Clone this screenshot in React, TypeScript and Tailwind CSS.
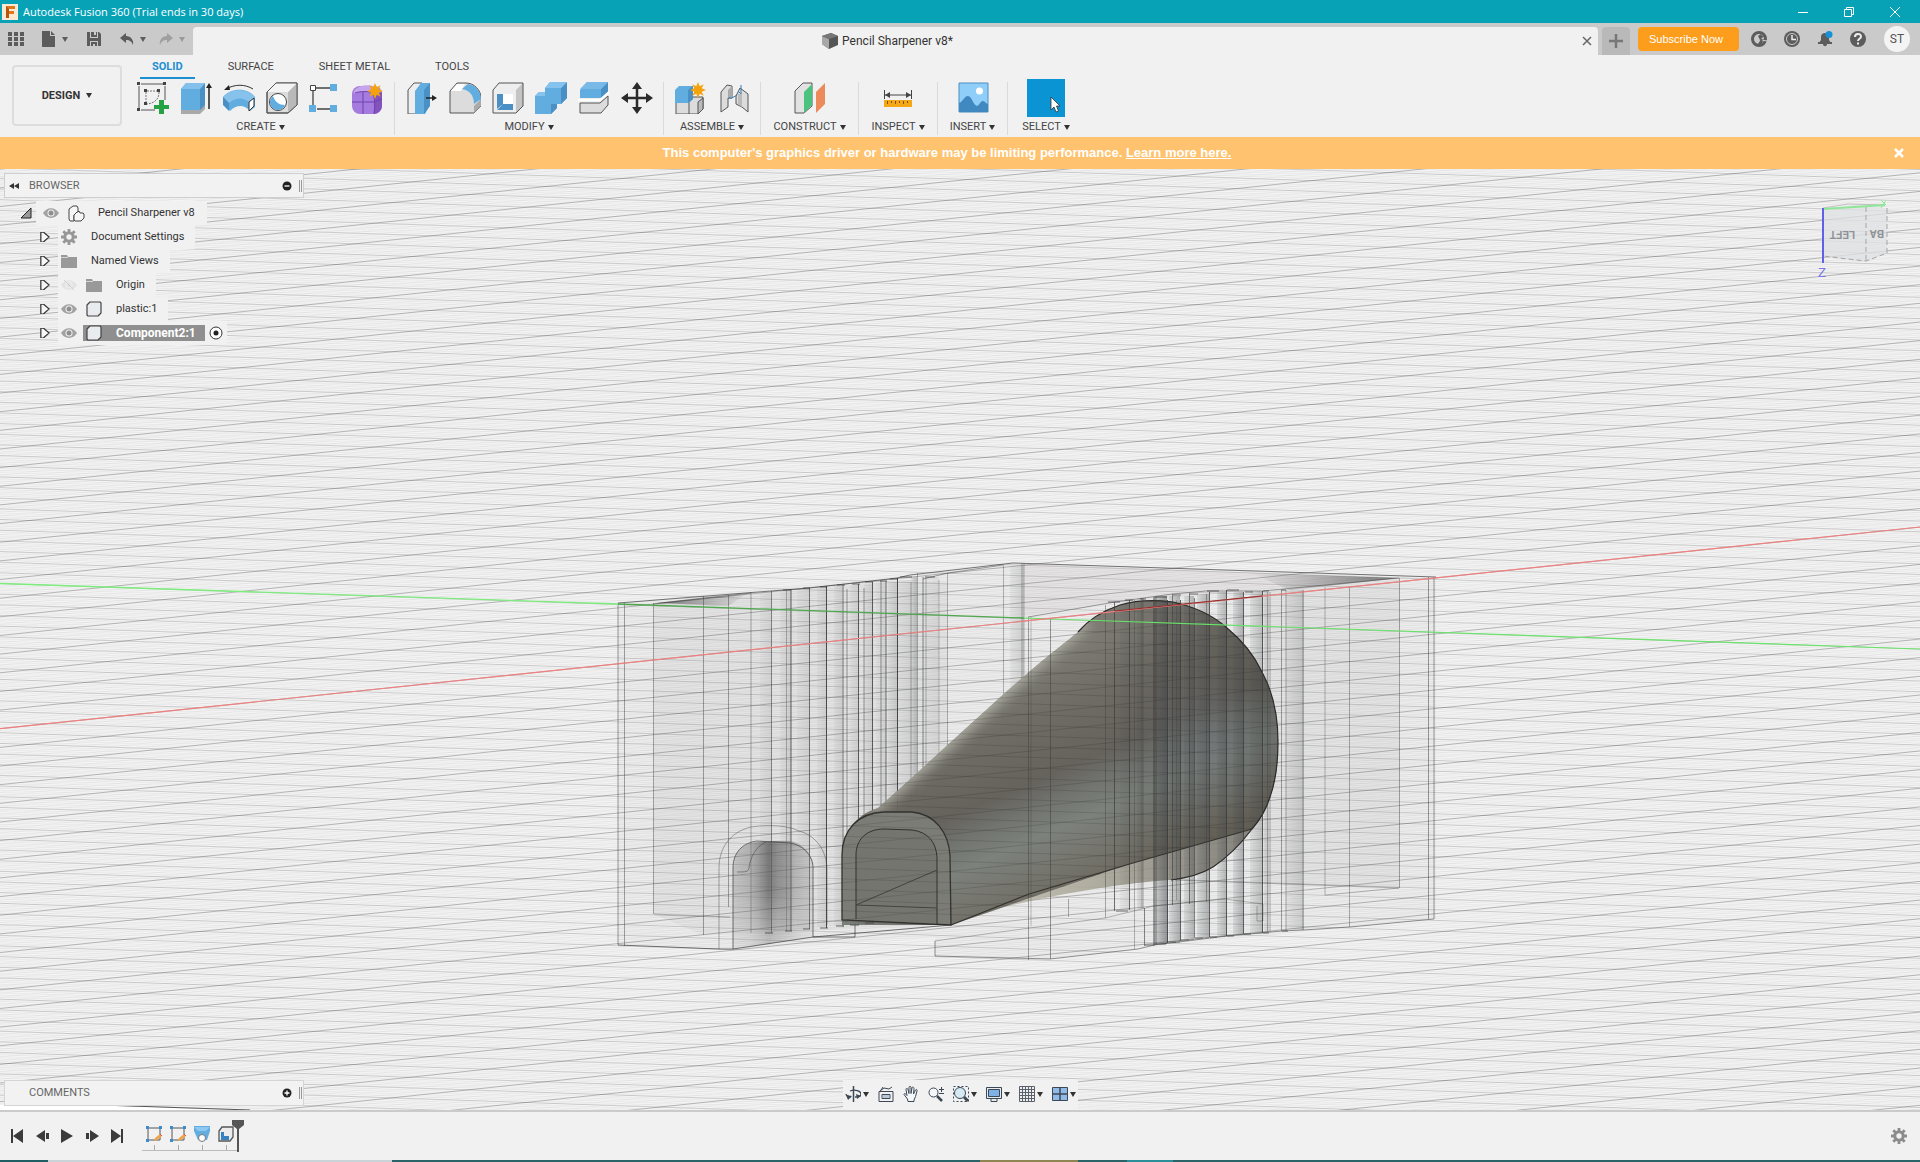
import type { JSX, ReactNode } from 'react';

const BLUE = '#62ade0';
const BLUE_DARK = '#4b90c4';
const EDGE = '#555555';
const FACE = '#dcdcdc';

type IconProps = { children: ReactNode; size?: number; box?: number; className?: string };

function Icon({ children, size = 32, box = 32, className }: IconProps): JSX.Element {
  return (
    <svg
      width={size}
      height={size}
      viewBox={`0 0 ${box} ${box}`}
      fill="none"
      className={className ?? 'shrink-0'}
      aria-hidden="true"
    >
      {children}
    </svg>
  );
}

function Caret({ className = 'text-[#333]' }: { className?: string }): JSX.Element {
  return (
    <svg width="6" height="5" viewBox="0 0 6 5" className={`shrink-0 ${className}`} aria-hidden="true">
      <path d="M0 0h6L3 5z" fill="currentColor" />
    </svg>
  );
}

function Spark({ x, y }: { x: number; y: number }): JSX.Element {
  return (
    <path
      transform={`translate(${x} ${y})`}
      d="M0-8l1.700 4.300L5.700-5.700 3.700-1.700 8 0 3.700 1.700 5.700 5.700 1.700 3.700 0 8-1.700 3.700-5.700 5.700-3.700 1.700-8 0-3.700-1.700-5.700-5.700-1.700-3.700z"
      fill="#f5a30c"
    />
  );
}

const createIcons: [string, JSX.Element][] = [
  [
    'Create Sketch',
    <Icon key="i">
      <path d="M2 4v22M4 2h22M28 4v14M4 28h14" stroke="#555" />
      <path d="M9 10v12M10 9h12M22 10c0 7-4 11-12 12" stroke="#777" strokeDasharray="2 1" />
      <path d="M0 0h3v3H0zM26 0h3v3h-3zM0 26h3v3H0zM7 7h3v3H7zM20 7h3v3h-3zM7 20h3v3H7z" fill="#444" />
      <path d="M22 18h5v5h5v4h-5v5h-5v-5h-5v-4h5z" fill="#25a244" />
    </Icon>,
  ],
  [
    'Extrude',
    <Icon key="i">
      <path d="M1 7l5-6h19v23l-5 6H1z" fill={BLUE} />
      <path d="M20 7l5-6v23l-5 5z" fill={BLUE_DARK} />
      <path d="M1 7l5-6h19l-5 6z" fill="#83c0eb" />
      <path d="M1 28h19l5-5v4l-5 5H1z" fill="#aaa" />
      <path d="M29 5v22" stroke="#222" strokeWidth="1.500" />
      <path d="M29 1l3 5h-6z" fill="#222" />
    </Icon>,
  ],
  [
    'Revolve',
    <Icon key="i">
      <path d="M0 15c8-9 24-10 32 0v10l-5 4c-6-7-14-6-20 0l-7-7z" fill={BLUE} />
      <path d="M0 15l6 6c7-6 15-6 21 0l5-6C24 6 8 6 0 15z" fill="#86c2ec" />
      <path d="M0 15l6 6v8l-6-6z" fill={BLUE_DARK} />
      <path d="M26 20l5-4v8l-5 5z" fill="#fff" stroke="#333" />
      <path d="M3 7C12 2 22 2 30 7" stroke="#333" />
      <path d="M1 8l5-5 1 5z" fill="#222" />
    </Icon>,
  ],
  [
    'Hole',
    <Icon key="i">
      <path d="M1 10l9-9h21v22l-9 8H1z" fill={FACE} stroke={EDGE} />
      <path d="M22 10l9-9v22l-9 8z" fill="#b9b9b9" />
      <path d="M1 10l9-9h21l-9 9z" fill="#f4f4f4" />
      <path d="M1 10l9-9h21v22l-9 8H1z" stroke={EDGE} />
      <circle cx="12" cy="20" r="8.500" fill="#fff" stroke="#444" />
      <path d="M7 14c2 6 6 9 12 9-1 3-4 5-7 5-5 0-8-4-8-8 0-2 1-4 3-6z" fill={BLUE} />
    </Icon>,
  ],
  [
    'Rectangular Pattern',
    <Icon key="i">
      <path d="M7 6h14M4 9v14M8 27h13" stroke="#444" strokeWidth="1.300" />
      <path d="M1.500 3.500h5v5h-5z" fill="#fff" stroke="#444" />
      <path d="M21 2h7v7h-7zM0 23h7v7H0zM21 23h7v7h-7z" fill={BLUE} />
    </Icon>,
  ],
  [
    'Create Form',
    <Icon key="i">
      <rect x="0" y="4" width="30" height="28" rx="8" fill="#a57be0" />
      <path d="M22 12l8-2v13c0 5-3 8-8 9z" fill="#8252bd" />
      <path d="M2 9c4-6 15-7 22-4l-3 6C14 9 6 9 2 12z" fill="#c6a5ef" />
      <path d="M0 20h22l8-3M11 10v22M3 11c6-2 14-2 18 0 2 6 2 14 1 21" stroke="#7143ad" />
      <Spark x={23} y={9} />
    </Icon>,
  ],
];

const modifyIcons: [string, JSX.Element][] = [
  [
    'Press Pull',
    <Icon key="i">
      <path d="M2 8l6-7h8v24l-5 7H2z" fill="#eee" stroke={EDGE} />
      <path d="M9 9l6-8h9v22l-5 9H9z" fill={BLUE} />
      <path d="M18 8l6-7v23l-6 8z" fill={BLUE_DARK} />
      <path d="M20 16h8" stroke="#222" strokeWidth="1.500" />
      <path d="M31 16l-5-3v6z" fill="#222" />
    </Icon>,
  ],
  [
    'Fillet',
    <Icon key="i">
      <path d="M1 9l7-8h9c8 0 15 7 15 15v8l-7 7H1z" fill={FACE} stroke={EDGE} />
      <path d="M25 24l7-7v7l-7 7z" fill="#aaa" />
      <path d="M2 9l6-7h8l-4 7z" fill="#fff" />
      <path d="M13 7l6-5c8 1 13 8 13 15l-7 5C25 13 20 8 13 7z" fill={BLUE} />
    </Icon>,
  ],
  [
    'Shell',
    <Icon key="i">
      <path d="M1 8l6-7h24v23l-7 7H1z" fill="#eee" />
      <path d="M24 8l7-7v23l-7 7z" fill="#c4c4c4" />
      <path d="M1 8l6-7h24v23l-7 7H1z" stroke={EDGE} />
      <path d="M5 12h16v16H5z" fill="#fff" />
      <path d="M5 12h6v10l-6 5zM5 28l6-6h10v6z" fill={BLUE_DARK} />
    </Icon>,
  ],
  [
    'Combine',
    <Icon key="i">
      <path d="M0 14l4-4h6V6l5-6h17v16l-6 6h-4v4l-6 6H0z" fill={BLUE} />
      <path d="M26 6l6-6v16l-6 6zM22 22v4l-6 6v-10z" fill={BLUE_DARK} />
      <path d="M10 6l5-6h17l-6 6zM0 14l4-4h6v4z" fill="#85c2ed" />
    </Icon>,
  ],
  [
    'Split Body',
    <Icon key="i">
      <path d="M2 8l7-8h21v9l-7 7H2z" fill={BLUE} />
      <path d="M23 7l7-7v10l-7 6z" fill={BLUE_DARK} />
      <path d="M2 7l7-7h21l-7 7z" fill="#79b9e7" />
      <path d="M0 18h22l9-8" stroke="#fff" strokeWidth="2" />
      <path d="M2 21h20l8-7v9l-7 8H2z" fill={FACE} stroke={EDGE} />
    </Icon>,
  ],
  [
    'Move',
    <Icon key="i">
      <path d="M16 4v24M4 16h24" stroke="#2b2b2b" strokeWidth="2.500" />
      <path d="M16 0l5 7H11zM16 32l5-7H11zM0 16l7-5v10zM32 16l-7-5v10z" fill="#2b2b2b" />
    </Icon>,
  ],
];

const assembleIcons: [string, JSX.Element][] = [
  [
    'New Component',
    <Icon key="i">
      <path d="M1 18h13l4-3h10v12l-5 5H1z" fill={FACE} stroke={EDGE} />
      <path d="M14 18v14M23 20l5-4v11l-5 5z" fill="#bbb" stroke={EDGE} />
      <path d="M0 8l4-4h14v13l-4 4H0z" fill={BLUE} />
      <path d="M13 8l5-4v13l-5 4z" fill={BLUE_DARK} />
      <Spark x={23} y={8} />
    </Icon>,
  ],
  [
    'Joint',
    <Icon key="i">
      <path d="M3 30V10l6-7 5 1v12h-4v9z" fill={FACE} stroke={EDGE} />
      <path d="M10 8l4-4v12h-4z" fill="#aaa" />
      <path d="M19 12l3-6 8 6v18l-6-5-6-3v-8z" fill={FACE} stroke={EDGE} />
      <path d="M20 12h4v13l-4-3z" fill="#bbb" />
      <path d="M23 3v9l-3-3M10 16h4l5-3" stroke="#3a7db4" />
    </Icon>,
  ],
];

const constructIcons: [string, JSX.Element][] = [
  [
    'Offset Plane',
    <Icon key="i">
      <path d="M1 9l8-8h9v23l-8 7H1z" fill="#e2e2e2" stroke={EDGE} />
      <path d="M10 10l8-8v21l-8 8z" fill="#4cc27f" />
      <path d="M22 10l9-9v21l-9 9z" fill="#ec8a5c" />
    </Icon>,
  ],
];

const inspectIcons: [string, JSX.Element][] = [
  [
    'Measure',
    <Icon key="i">
      <path d="M2.500 8v9M29.500 8v9M3 13h26" stroke="#444" />
      <path d="M3 13l5-3v6zM29 13l-5-3v6z" fill="#444" />
      <path d="M2 18h28v7H2z" fill="#f5a816" />
      <path d="M5.500 19v3M9.500 19v2M13.500 19v3M17.500 19v2M21.500 19v3M25.500 19v2" stroke="#7c5200" />
    </Icon>,
  ],
];

const insertIcons: [string, JSX.Element][] = [
  [
    'Insert Image',
    <Icon key="i">
      <path d="M2 1h29v29H2z" fill="#8fcef8" stroke="#4b90c4" />
      <circle cx="22.500" cy="9" r="3.500" fill="#fff" />
      <path d="M2 21c4-1 5-7 9-7s5 9 9 10c3-1 3-5 6-5 2 0 3 3 5 3v8H2z" fill="#3f88c0" />
    </Icon>,
  ],
];

type RibbonGroupProps = { label: string; icons: [string, JSX.Element][]; className: string };

function RibbonGroup({ label, icons, className }: RibbonGroupProps): JSX.Element {
  return (
    <section className={`flex flex-col items-center border-r border-[#dadada] ${className}`}>
      <div className="flex h-8">
        {icons.map(([name, icon]) => (
          <button
            key={name}
            type="button"
            aria-label={name}
            className="flex h-8 w-[43px] items-center justify-center"
          >
            {icon}
          </button>
        ))}
      </div>
      <button type="button" className="mt-[5px] flex h-4 items-center gap-[3px]">
        {label}
        <Caret />
      </button>
    </section>
  );
}

function TitleBar(): JSX.Element {
  return (
    <header className="flex h-[23px] shrink-0 items-center bg-[#08a2b7] pl-[2px] text-white">
      <svg width="16" height="16" viewBox="0 0 16 16" aria-hidden="true">
        <path d="M0 0h16v16H0z" fill="#fbe9d3" />
        <path d="M4 2h9v3H7v2h5v3H7v4H4z" fill="#e2761b" />
        <path d="M4 2l3 3v9H4z" fill="#b5530f" />
      </svg>
      <h1 className="ml-[5px] font-['Open_Sans',sans-serif] text-[11px]">
        Autodesk Fusion 360 (Trial ends in 30 days)
      </h1>
      <div className="ml-auto flex h-full items-center pr-[2px]">
        <button type="button" aria-label="Minimize" className="flex w-[46px] justify-center">
          <Icon size={12} box={12}>
            <path d="M1 6.500h10" stroke="#fff" />
          </Icon>
        </button>
        <button type="button" aria-label="Restore" className="flex w-[46px] justify-center">
          <Icon size={12} box={12}>
            <path d="M1.500 3.500h7v7h-7zM3.500 3.500v-2h7v7h-2" stroke="#fff" />
          </Icon>
        </button>
        <button type="button" aria-label="Close" className="flex w-[46px] justify-center">
          <Icon size={12} box={12}>
            <path d="M1 1l10 10M11 1L1 11" stroke="#fff" />
          </Icon>
        </button>
      </div>
    </header>
  );
}

function TabBar(): JSX.Element {
  return (
    <div className="flex h-8 shrink-0 bg-[#cacaca] text-[#5c5c5c]">
      <div className="flex w-[193px] shrink-0 items-center pl-2">
        <button type="button" aria-label="Data Panel">
          <Icon size={16} box={16}>
            <path
              d="M0 1h4v4H0zM6 1h4v4H6zM12 1h4v4h-4zM0 6h4v4H0zM6 6h4v4H6zM12 6h4v4h-4zM0 11h4v4H0zM6 11h4v4H6zM12 11h4v4h-4z"
              fill="currentColor"
            />
          </Icon>
        </button>
        <button type="button" aria-label="File" className="ml-[17px] flex items-center gap-[5px]">
          <Icon size={16} box={16}>
            <path d="M1 0h8v5h5v11H1zM10 0l4 4h-4z" fill="currentColor" />
          </Icon>
          <Caret className="text-[#5c5c5c]" />
        </button>
        <button type="button" aria-label="Save" className="ml-[18px]">
          <Icon size={16} box={16}>
            <path d="M1 1h3v6h8V1h1l2 2v12h-3v-5H4v5H1zM5 1h3v3h2V1h1v5H5zM5 11h6v4H9v-2H7v2H5z" fill="currentColor" />
          </Icon>
        </button>
        <button type="button" aria-label="Undo" className="ml-[18px] flex items-center gap-[6px]">
          <Icon size={14} box={14}>
            <path d="M6 1v3c5 0 8 4 7 9-1-3-3-5-7-5v3L0 6z" fill="currentColor" />
          </Icon>
          <Caret className="text-[#5c5c5c]" />
        </button>
        <button type="button" aria-label="Redo" className="ml-[13px] flex items-center gap-[6px] text-[#a0a0a0]">
          <Icon size={14} box={14}>
            <path d="M8 1l6 5-6 5V8C4 8 2 10 1 13 0 8 3 4 8 4z" fill="currentColor" />
          </Icon>
          <Caret className="text-[#999]" />
        </button>
      </div>
      <div className="relative mt-1 flex grow items-center justify-center rounded-t bg-[#f1f1f1] pr-4">
        <Icon size={16} box={16}>
          <path d="M0 3l9-3 7 3v9l-9 4-7-5z" fill="#555" />
          <path d="M0 3l7 3v10l-7-5z" fill="#a8a8a8" />
          <path d="M0 3l9-3 7 3-9 3z" fill="#777" />
        </Icon>
        <span className="ml-1 text-[12px] text-[#333]">Pencil Sharpener v8*</span>
        <button type="button" aria-label="Close tab" className="absolute right-[6px]">
          <Icon size={10} box={10}>
            <path d="M1 1l8 8M9 1L1 9" stroke="#666" strokeWidth="1.500" />
          </Icon>
        </button>
      </div>
      <div className="flex w-[322px] shrink-0 items-center">
        <button
          type="button"
          aria-label="New design"
          className="mt-1 ml-1 flex h-7 w-7 items-center justify-center rounded-t bg-[#b9b9b9]"
        >
          <Icon size={14} box={14}>
            <path d="M7 0v14M0 7h14" stroke="#777" strokeWidth="2.500" />
          </Icon>
        </button>
        <a
          href="#subscribe"
          className="ml-2 flex h-6 w-[101px] items-center rounded bg-[#fc9d1c] pl-[11px] font-['Liberation_Sans',sans-serif] text-[11px] text-white"
        >
          Subscribe Now
        </a>
        <div className="ml-3 flex items-center gap-[17px]">
          <button type="button" aria-label="Extensions">
            <Icon size={16} box={16}>
              <circle cx="8" cy="8" r="6.500" stroke="currentColor" strokeWidth="3" />
              <path d="M7 13l3-5h3l-3 6zM7 5l2 4 5-5-3 1-1-2z" fill="currentColor" />
              <path d="M11 9l5 1" stroke="#cacaca" />
            </Icon>
          </button>
          <button type="button" aria-label="Job Status">
            <Icon size={16} box={16}>
              <circle cx="8" cy="8" r="8" fill="currentColor" />
              <circle cx="8" cy="8" r="5.500" fill="currentColor" stroke="#cacaca" />
              <path d="M8 4v4.500h4" stroke="#eee" strokeWidth="1.500" />
            </Icon>
          </button>
          <button type="button" aria-label="Notifications">
            <Icon size={16} box={16}>
              <path d="M2 12l2-3V6c0-3 2-4 4-4s4 1 4 4v3l2 3zM6 13h4c0 3-4 3-4 0zM1 11h14v2H1z" fill="currentColor" />
              <circle cx="12" cy="3.500" r="3.500" fill="#1791d5" />
            </Icon>
          </button>
          <button type="button" aria-label="Help">
            <Icon size={16} box={16}>
              <circle cx="8" cy="8" r="8" fill="currentColor" />
              <path d="M5 6c0-4 6-4 6-.5C11 8 8 7.500 8 10" stroke="#eee" strokeWidth="2" />
              <path d="M7 11.500h2v2H7z" fill="#eee" />
            </Icon>
          </button>
        </div>
        <button
          type="button"
          className="ml-[18px] flex h-[26px] w-[26px] items-center justify-center rounded-full bg-[#f4f4f4] text-[12px] text-[#555]"
        >
          ST
        </button>
      </div>
    </div>
  );
}

function Ribbon(): JSX.Element {
  return (
    <div className="flex h-[82px] shrink-0 bg-[#f1f1f1]">
      <div className="w-[131px] shrink-0 pt-[10px] pl-3">
        <button
          type="button"
          className="flex h-[61px] w-[110px] items-center justify-center gap-[6px] rounded-sm border-2 border-[#dddddd] font-bold text-[#333]"
        >
          DESIGN
          <Caret />
        </button>
      </div>
      <div>
        <nav className="flex h-[27px] items-start gap-[45px] pl-[21px]">
          <a href="#solid" className="relative h-[24px] pt-1 font-bold text-[#1e8fd0]">
            SOLID
            <span className="absolute -inset-x-3 bottom-0 h-[2px] bg-[#1e8fd0]" />
          </a>
          <a href="#surface" className="pt-1">
            SURFACE
          </a>
          <a href="#sheet-metal" className="pt-1">
            SHEET METAL
          </a>
          <a href="#tools" className="pt-1">
            TOOLS
          </a>
        </nav>
        <div className="flex h-[53px]">
          <RibbonGroup label="CREATE" icons={createIcons} className="w-[264px] pr-1" />
          <RibbonGroup label="MODIFY" icons={modifyIcons} className="w-[269px]" />
          <RibbonGroup label="ASSEMBLE" icons={assembleIcons} className="w-[97px]" />
          <RibbonGroup label="CONSTRUCT" icons={constructIcons} className="w-[98px]" />
          <RibbonGroup label="INSPECT" icons={inspectIcons} className="w-[79px]" />
          <RibbonGroup label="INSERT" icons={insertIcons} className="w-[70px]" />
          <section className="flex w-[76px] flex-col items-center">
            <button
              type="button"
              aria-label="Select"
              className="-mt-[3px] -mb-[3px] flex h-[38px] w-[38px] shrink-0 items-end justify-end bg-[#0b94d4]"
            >
              <Icon size={16} box={16} className="mb-1 shrink-0">
                <path d="M2 0l9 9H7.500l2 5-2.500 1-2-5-3 3z" fill="#fff" stroke="#333" strokeWidth=".8" />
              </Icon>
            </button>
            <button type="button" className="mt-[5px] flex h-4 items-center gap-[3px]">
              SELECT
              <Caret />
            </button>
          </section>
        </div>
      </div>
    </div>
  );
}

const H = 1920;

// both ground-plane directions are parallel families, so one step and one slope describe each
function lineFamily(originY: number, step: number, slope: number, skipEvery: number): string {
  const drop = slope * H;
  const parts: string[] = [];
  for (let n = -400; n <= 400; n += 1) {
    const y = originY + n * step;
    if (skipEvery && n % skipEvery === 0) continue;
    if (Math.max(y, y + drop) < 160 || Math.min(y, y + drop) > 1120) continue;
    parts.push(`M0 ${y.toFixed(1)}L${H} ${(y + drop).toFixed(1)}`);
  }
  return parts.join('');
}

const RISING = lineFamily(728.7, 18.65, -0.105, 0);
const RISING_FINE = lineFamily(728.7, 3.73, -0.105, 5);
const FALLING = lineFamily(583.5, 10.66, 0.0342, 0);
const FALLING_FINE = lineFamily(583.5, 2.132, 0.0342, 5);

// x, top, bottom, opacity
const backLines: [number, number, number, number][] = [
  [618, 603, 945, 0.5],
  [624.5, 603, 946, 0.45],
  [653.5, 603, 914, 0.4],
  [703.5, 596, 935, 0.45],
  [728.5, 595, 907, 0.45],
  [751, 592, 933, 0.4],
  [771.5, 591, 933, 0.55],
  [786.5, 590, 931, 0.35],
  [791, 589, 931, 0.8],
  [809.5, 588, 929, 0.7],
  [826.5, 586, 928, 0.9],
  [843, 585, 927, 0.5],
  [847, 589, 925, 0.5],
  [858.5, 584, 924, 0.8],
  [864, 588, 924, 0.5],
  [872.5, 582, 923, 0.8],
  [881, 581, 850, 0.5],
  [886, 581, 830, 0.7],
  [897.5, 578, 820, 0.95],
  [911, 582, 800, 0.4],
  [917.5, 573, 790, 0.4],
  [923, 577, 780, 0.6],
  [926, 577, 775, 0.35],
  [939, 580, 760, 0.3],
  [947.5, 573, 760, 0.35],
  [1003.5, 565, 720, 0.35],
  [1022, 563, 690, 0.4],
  [1024, 563, 690, 0.35],
];

const frontLines: [number, number, number, number][] = [
  [1028.5, 617, 960, 0.45],
  [1031, 617, 926, 0.3],
  [1050.5, 618, 959, 0.5],
  [1068.5, 899, 917, 0.4],
  [1105.5, 605, 918, 0.4],
  [1114.5, 602, 911, 0.7],
  [1129.5, 600, 910, 0.75],
  [1134.5, 600, 949, 0.35],
  [1142, 598, 908, 0.3],
  [1144.5, 908, 946, 0.6],
  [1154, 597, 945, 0.9],
  [1156, 597, 945, 0.6],
  [1167.5, 600, 943, 0.9],
  [1172.5, 594, 905, 0.6],
  [1176.5, 600, 900, 0.3],
  [1180.5, 600, 941, 0.8],
  [1189.5, 593, 904, 0.65],
  [1194.5, 598, 938, 0.6],
  [1206.5, 594, 902, 0.4],
  [1209.5, 592, 937, 0.8],
  [1226.5, 590, 936, 0.85],
  [1243.5, 592, 934, 0.8],
  [1262.5, 591, 933, 0.85],
  [1267.5, 592, 932, 0.35],
  [1281.5, 590, 931, 0.45],
  [1286, 590, 931, 0.4],
  [1303, 590, 930, 0.45],
  [1325, 587, 895, 0.35],
  [1349.5, 587, 927, 0.4],
  [1399.5, 578, 888, 0.45],
  [1428.5, 577, 919, 0.5],
  [1434, 577, 919, 0.5],
];

// x, width, top, bottom, opacity
type Band = [number, number, number, number, number];

const backBands: Band[] = [
  [760, 12, 592, 930, 0.1],
  [780, 11, 590, 930, 0.12],
  [797, 12, 588, 929, 0.1],
  [817, 10, 586, 927, 0.12],
  [834, 10, 585, 926, 0.14],
  [850, 9, 585, 924, 0.12],
  [864, 9, 584, 923, 0.14],
  [876, 10, 583, 850, 0.1],
  [888, 9, 582, 830, 0.16],
  [898, 13, 580, 810, 0.1],
  [911, 6, 577, 795, 0.28],
  [923, 16, 577, 775, 0.08],
  [1010, 14, 566, 700, 0.16],
];

const frontBands: Band[] = [
  [1120, 9, 601, 910, 0.12],
  [1137, 7, 598, 909, 0.24],
  [1154, 13, 596, 944, 0.5],
  [1169, 11, 596, 943, 0.36],
  [1184, 10, 596, 940, 0.32],
  [1197, 12, 594, 938, 0.34],
  [1217, 9, 592, 937, 0.3],
  [1233, 10, 592, 935, 0.34],
  [1250, 12, 591, 934, 0.26],
  [1264, 7, 592, 932, 0.22],
  [1286, 18, 590, 930, 0.18],
];

function Verticals({ lines }: { lines: [number, number, number, number][] }): JSX.Element {
  return (
    <g stroke="#3c3c3c" strokeWidth="1">
      {lines.map(([x, top, bottom, opacity]) => (
        <path key={x} d={`M${x} ${top}V${bottom}`} opacity={opacity} />
      ))}
    </g>
  );
}

function Bands({ bands }: { bands: Band[] }): JSX.Element {
  return (
    <g fill="url(#band)">
      {bands.map(([x, w, top, bottom, opacity]) => (
        <rect key={x} x={x} y={top} width={w} height={bottom - top} opacity={opacity} />
      ))}
    </g>
  );
}

const CONE =
  'M878 808C930 762 985 710 1029 672C1050 654 1066 642 1078 632C1090 618 1105 610 1120 605C1137 600 1158 600 1173 602C1195 607 1213 615 1227 628C1243 641 1254 655 1262 672C1273 692 1278 718 1278 742C1278 765 1276 780 1270 797C1266 810 1260 820 1252 829L1133 863L951 925H842V855C842 835 854 815 878 808Z';
const CONE_UNDER = 'M951 925L1133 863L1252 829C1240 845 1228 857 1213 867C1200 875 1187 878 1171 880C1120 883 1040 897 990 911Z';

function Viewport3D(): JSX.Element {
  return (
    <svg
      className="absolute inset-0 h-full w-full"
      viewBox="0 169 1920 941"
      preserveAspectRatio="xMidYMid slice"
      fill="none"
      role="img"
      aria-label="Pencil sharpener model on the ground grid"
    >
      <defs>
        <linearGradient id="cone" gradientUnits="userSpaceOnUse" x1="1010" y1="680" x2="1098" y2="884">
          <stop offset="0" stopColor="#75736b" />
          <stop offset=".2" stopColor="#69665f" />
          <stop offset=".46" stopColor="#5f5b55" />
          <stop offset=".58" stopColor="#6b6e69" />
          <stop offset=".7" stopColor="#777c76" />
          <stop offset=".88" stopColor="#6e6d65" />
          <stop offset="1" stopColor="#666257" />
        </linearGradient>
        <linearGradient id="under" x1="0" y1="0" x2="1" y2="0">
          <stop offset="0" stopColor="#c4c1b0" />
          <stop offset=".45" stopColor="#a8a596" />
          <stop offset=".8" stopColor="#86837a" />
          <stop offset="1" stopColor="#75736b" />
        </linearGradient>
        <linearGradient id="cap" x1="0" y1="0" x2="1" y2="0">
          <stop offset="0" stopColor="#3a3833" stopOpacity="0" />
          <stop offset=".4" stopColor="#3a3833" stopOpacity=".15" />
          <stop offset="1" stopColor="#3a3833" stopOpacity=".25" />
        </linearGradient>
        <radialGradient id="capLight">
          <stop offset="0" stopColor="#7b868c" stopOpacity=".4" />
          <stop offset="1" stopColor="#7b868c" stopOpacity="0" />
        </radialGradient>
        <linearGradient id="arch" x1="0" y1="0" x2="1" y2="0">
          <stop offset="0" stopColor="#777" stopOpacity=".3" />
          <stop offset=".2" stopColor="#777" stopOpacity=".45" />
          <stop offset=".45" stopColor="#555" stopOpacity=".75" />
          <stop offset=".7" stopColor="#666" stopOpacity=".5" />
          <stop offset="1" stopColor="#999" stopOpacity=".2" />
        </linearGradient>
        <linearGradient id="archFade" x1="0" y1="0" x2="0" y2="1">
          <stop offset="0" stopColor="#fff" />
          <stop offset=".5" stopColor="#eee" />
          <stop offset="1" stopColor="#444" />
        </linearGradient>
        <linearGradient id="band" x1="0" y1="0" x2="1" y2="0">
          <stop offset="0" stopColor="#3d4144" stopOpacity=".3" />
          <stop offset="1" stopColor="#3d4144" />
        </linearGradient>
        <linearGradient id="sliverLeft" x1="0" y1="0" x2="1" y2="0">
          <stop offset="0" stopColor="#333" stopOpacity=".6" />
          <stop offset="1" stopColor="#333" stopOpacity="0" />
        </linearGradient>
        <linearGradient id="sliverRight" x1="0" y1="0" x2="1" y2="0">
          <stop offset="0" stopColor="#333" stopOpacity="0" />
          <stop offset="1" stopColor="#333" stopOpacity=".6" />
        </linearGradient>
        <filter id="soft" x="-10%" y="-10%" width="120%" height="120%">
          <feGaussianBlur stdDeviation="7" />
        </filter>
        <mask id="archMask">
          <path d="M730 830h90v122h-90z" fill="url(#archFade)" />
        </mask>
        <clipPath id="coneClip">
          <path d={CONE} />
        </clipPath>
      </defs>

      <path d={`M0 160H${H}V1120H0z`} fill="#f4f4f4" />
      <path d={FALLING_FINE} stroke="#000" strokeOpacity=".045" />
      <path d={RISING_FINE} stroke="#000" strokeOpacity=".03" />
      <path d={FALLING} stroke="#000" strokeOpacity=".17" />
      <path d={RISING} stroke="#000" strokeOpacity=".25" />

      <path d="M618 603L880 578L1013 563L1436 577V919L1138 947L1050 959L935 956V937L733 950L618 945Z" fill="#000" opacity=".025" />
      <path d="M653 603L880 582H948V925L703 935L653 914Z" fill="#000" opacity=".035" />
      <path d="M1262 591L1399 579V888L1262 884Z" fill="#000" opacity=".035" />
      <path d="M1024 564L1399 578L1115 602L1024 616Z" fill="#a08088" opacity=".09" />
      <path d="M656 603L750 592L728 606Z" fill="url(#sliverLeft)" />
      <path d="M1250 573L1399 578L1290 590Z" fill="url(#sliverRight)" />
      <Bands bands={backBands} />
      <Verticals lines={backLines} />

      <path
        d="M733 950V868C733 853 742 843 757 842L775 841H790C803 843 812 852 813 866V937L733 950Z"
        fill="url(#arch)"
        mask="url(#archMask)"
      />
      <g stroke="#3c3c3c" strokeOpacity=".7">
        <path d="M733 949V868C733 853 742 843 757 841L790 843C803 845 812 855 813 866V937H855V922" />
        <path d="M719 949V868C719 848 730 832 751 827M751 827C770 824 790 826 799 831C815 835 827 850 827 870V925" opacity=".6" />
        <path d="M737 872C746 872 748 872 749 868C750 858 756 846 766 842" opacity=".7" />
        <path d="M618 945L719 949H733L813 937L951 925" />
      </g>

      <path d={CONE_UNDER} fill="url(#under)" fillOpacity=".85" />
      <path d={CONE} fill="url(#cone)" fillOpacity=".95" />
      <g clipPath="url(#coneClip)">
        <path
          d="M870 808C930 758 985 706 1029 666C1050 648 1068 636 1085 620"
          stroke="#b9baae"
          strokeWidth="14"
          filter="url(#soft)"
        />
        <path d="M1105 590h180v300h-180z" fill="url(#cap)" />
        <ellipse cx="1210" cy="745" rx="75" ry="80" fill="url(#capLight)" />
      </g>
      <Bands bands={frontBands} />

      <path
        d="M842 920V855C842 830 858 813 884 812H912C935 814 949 833 950 856L951 925Z"
        fill="#7a7c75"
        stroke="#33322f"
        strokeWidth="1.300"
      />
      <path
        d="M856 919V855C856 840 866 829 884 829L912 830C928 832 936 842 937 857V924"
        fill="#6b6c65"
        fillOpacity=".4"
        stroke="#33322f"
      />
      <path d="M856 905L937 908M856 905L937 870" stroke="#44433f" />
      <g clipPath="url(#coneClip)" stroke="#222" strokeOpacity=".14">
        <path d={RISING} />
        <path d={FALLING} />
      </g>
      <path d="M951 925L1029 894L1133 863L1252 829" stroke="#33322f" strokeWidth="1.200" />
      <path
        d="M1078 632C1090 618 1105 610 1120 605C1137 600 1158 600 1173 602C1195 607 1213 615 1227 628C1243 641 1254 655 1262 672C1273 692 1278 718 1278 742C1278 765 1276 780 1270 797C1266 810 1260 820 1252 829C1240 845 1228 857 1213 867C1200 875 1187 878 1171 880"
        stroke="#2b2a28"
        strokeWidth="1.200"
      />
      <Verticals lines={frontLines} />

      <g stroke="#333" strokeOpacity=".65">
        <path d="M618 603L771 591L809 588L845 584L897 578L910 575L1013 563L1436 577" />
        <path d="M653 604L751 593M923 579L948 573L1003 565M1028 617L1115 602L1130 600L1172 594L1206 591L1262 591L1399 578" opacity=".7" />
        <path d="M1434 919L1350 927L1303 930L1282 931L1227 936L1154 945L1138 949L1050 959L935 956V941" opacity=".8" />
        <path d="M935 941L1000 932L1105 918L1154 906L1225 899L1263 904V921H1257V906M1399 888L1175 880M1399 888L1325 895M654 914L730 917" opacity=".5" />
      </g>
      <path
        d="M765 933h8M785 931h7M803 929h7M820 928h8M836 926h8M850 925h9M865 923h9M783 590h8M803 588h7M820 587h7M837 585h8M852 584h8M865 582h8M880 581h7M890 579h8M900 577h12M925 577h10M1108 602h12M1125 600h8M1140 599h6M1155 597h12M1173 595h8M1190 594h8M1207 591h12M1227 590h12M1245 592h8M1263 591h6M1281 590h5M1145 945h10M1155 944h11M1168 942h8M1181 940h8M1195 938h8M1210 937h7M1227 936h7M1244 934h7M1263 933h6M1282 931h6M1116 911h12"
        stroke="#333"
        strokeOpacity=".7"
      />

      <path d="M0 583.500L618 604" stroke="#7dec7d" strokeWidth="1.300" />
      <path d="M618 604L1024 618" stroke="#4ea84e" strokeWidth="1.300" />
      <path d="M1024 618L1920 649" stroke="#6be26b" strokeWidth="1.200" />
      <path d="M0 728.700L1920 527" stroke="#ef8080" strokeWidth="1.200" />
      <path d="M1115 611L1262 596" stroke="#8c2f2b" strokeWidth="1.200" />

      <path d="M0 1105H100L250 1111H0Z" fill="#fff" />
      <path d="M100 1105L250 1110" stroke="#555" />
    </svg>
  );
}

function ViewCube(): JSX.Element {
  return (
    <svg
      className="absolute top-[28px] right-[26px]"
      width="80"
      height="84"
      viewBox="0 0 80 84"
      fill="none"
      role="img"
      aria-label="View cube"
    >
      <path d="M9 11L52 9V65L9 60Z" fill="#dde0e3" fillOpacity=".75" />
      <path d="M52 9L73 11V56L52 65Z" fill="#e0e2e4" fillOpacity=".75" />
      <path d="M52 10V65M73 11V56L52 64L34 62L9 59" stroke="#a5a5a5" strokeDasharray="5 3" />
      <path d="M9 11L34 7L71 8" stroke="#c0c0c0" />
      <path d="M9 12L71 8" stroke="#8fe698" strokeWidth="2" />
      <path d="M67 3l5 5M72 3l-5 8" stroke="#8ceb95" />
      <path d="M9 11V66" stroke="#5f62e8" strokeWidth="2" />
      <text x="4" y="80" fill="#7476e4" className="font-['Liberation_Sans',sans-serif] text-[13px]">
        Z
      </text>
      <g fill="#8d9094" className="font-['Liberation_Sans',sans-serif] text-[10px] font-bold">
        <text transform="translate(41 34) rotate(180)">LEFT</text>
        <text transform="translate(70 33) rotate(180)">BA</text>
      </g>
    </svg>
  );
}

function Eye({ hidden }: { hidden?: boolean }): JSX.Element {
  return (
    <Icon size={16} box={16}>
      <path d="M0 8c4-6.500 12-6.500 16 0-4 6.500-12 6.500-16 0z" fill={hidden ? '#e2e2e2' : '#a2a2a2'} />
      <circle cx="8" cy="8" r="3.500" fill="#f1f1f1" />
      <circle cx="8" cy="8" r="2.500" fill={hidden ? '#e2e2e2' : '#8f8f8f'} />
      {hidden && <path d="M3 3l10 10" stroke="#d0d0d0" />}
    </Icon>
  );
}

function Gear({ color }: { color: string }): JSX.Element {
  return (
    <Icon size={16} box={16}>
      <circle cx="8" cy="8" r="4.200" stroke={color} strokeWidth="3" />
      <path
        d="M8 0v3M8 13v3M0 8h3M13 8h3M2.300 2.300l2.200 2.200M11.500 11.500l2.200 2.200M2.300 13.700l2.200-2.200M11.500 4.500l2.200-2.200"
        stroke={color}
        strokeWidth="2.800"
      />
    </Icon>
  );
}

const nodeIcons = {
  assembly: (
    <Icon size={18} box={18}>
      <path d="M2 5l4-3h4l1 2v4l-4 3v6H3l-1-2z" fill="#f6f6f6" stroke="#444" strokeLinejoin="round" />
      <path d="M7 11l3-3h1l1-1 1 2h3l1 1v4l-3 3H8l-1-1z" fill="#f6f6f6" stroke="#444" strokeLinejoin="round" />
    </Icon>
  ),
  gear: <Gear color="#979797" />,
  folder: (
    <Icon size={16} box={16}>
      <path d="M0 2h6l1 2h9v11H0z" fill="#999" />
      <path d="M0 4.500h7" stroke="#d5d5d5" />
    </Icon>
  ),
  body: (
    <Icon size={16} box={16}>
      <path d="M1 4l3-3h10l1 1v10l-3 3H2l-1-1z" fill="#e9ebee" stroke="#444" strokeWidth="1.200" strokeLinejoin="round" />
    </Icon>
  ),
};

type TreeNode = { label: string; icon: keyof typeof nodeIcons; eye?: 'on' | 'off'; active?: boolean };

const nodes: TreeNode[] = [
  { label: 'Document Settings', icon: 'gear' },
  { label: 'Named Views', icon: 'folder' },
  { label: 'Origin', icon: 'folder', eye: 'off' },
  { label: 'plastic:1', icon: 'body', eye: 'on' },
  { label: 'Component2:1', icon: 'body', eye: 'on', active: true },
];

function BrowserPanel(): JSX.Element {
  return (
    <aside className="relative w-[304px] pt-1 pl-1">
      <div className="flex h-[25px] items-center border border-[#cfcfcf] bg-[#f2f2f2] pr-px pl-1">
        <button type="button" aria-label="Collapse browser">
          <Icon size={10} box={10}>
            <path d="M5 2v6L0 5zM10 2v6L5 5z" fill="#333" />
          </Icon>
        </button>
        <h2 className="ml-[10px] text-[#666]">BROWSER</h2>
        <button type="button" aria-label="Browser options" className="ml-auto">
          <Icon size={10} box={10}>
            <circle cx="5" cy="5" r="4.500" fill="#222" />
            <path d="M2.500 5h5" stroke="#fff" strokeWidth="1.300" />
          </Icon>
        </button>
        <span className="ml-[7px] h-3 w-[3px] border-x border-[#999]" />
      </div>
      <ul className="mt-[3px] text-[#333]">
        <li className="flex h-6 items-center">
          <button type="button" aria-label="Collapse Pencil Sharpener v8" className="ml-4">
            <Icon size={12} box={12}>
              <path d="M11 1v10H1z" fill="#999" stroke="#222" />
            </Icon>
          </button>
          <div className="ml-1 flex h-6 items-center bg-[#f1f1f1] pr-3 pl-[7px]">
            <Eye />
            <span className="mr-[13px] ml-2">{nodeIcons.assembly}</span>
            Pencil Sharpener v8
          </div>
        </li>
        {nodes.map((node) => (
          <li key={node.label} className="flex h-6 items-center">
            <button type="button" aria-label={`Expand ${node.label}`} className="ml-9">
              <Icon size={10} box={12}>
                <path d="M1 0l3 0 7 6-7 6H1z" fill="#f7f7f7" stroke="#333" strokeWidth="1.500" />
              </Icon>
            </button>
            <div className="ml-2 flex h-6 items-center bg-[#f1f1f1] pr-1 pl-[3px]">
              {node.eye && (
                <span className="mr-[6px]">
                  <Eye hidden={node.eye === 'off'} />
                </span>
              )}
              <div
                className={
                  node.active
                    ? 'flex h-4 items-center bg-[#8f8f8f] pr-[9px] pl-[3px] text-[12px] font-bold text-white'
                    : node.eye
                      ? 'flex h-4 items-center pr-[7px] pl-[3px]'
                      : 'flex h-4 items-center pr-[7px]'
                }
              >
                <span className="mr-[14px]">{nodeIcons[node.icon]}</span>
                {node.label}
              </div>
              {node.active && (
                <label className="ml-1 flex items-center">
                  <input type="radio" name="active" aria-label="Activate Component2:1" className="peer sr-only" defaultChecked />
                  <Icon size={14} box={14}>
                    <circle cx="7" cy="7" r="6" fill="#fff" stroke="#333" />
                    <circle cx="7" cy="7" r="2.500" fill="#222" />
                  </Icon>
                </label>
              )}
            </div>
          </li>
        ))}
      </ul>
    </aside>
  );
}

const INK = '#3d4855';

const navTools: { name: string; icon: JSX.Element; menu?: boolean }[] = [
  {
    name: 'Orbit',
    menu: true,
    icon: (
      <>
        <path d="M8.500 0v16" stroke={INK} strokeWidth="1.500" />
        <path d="M5 5c5-2 11 0 11 3 0 2-3 3-6 3M6 11c-3 0-5-2-5-3" stroke={INK} strokeWidth="1.300" />
        <path d="M1 9l6 1-4 4zM11 8l5 2-4 3z" fill={INK} />
      </>
    ),
  },
  {
    name: 'Look At',
    icon: (
      <>
        <path d="M1 5.500h14v10H1zM4 8.500h8v4H4zM2 5l4-3 5 1 3-2M5 1l-2 3" stroke={INK} />
        <path d="M5 9h6v3H5z" fill="#b7c9da" />
      </>
    ),
  },
  {
    name: 'Pan',
    icon: (
      <path
        d="M4.500 13L1 8.500c0-1.500 1.500-1 3 1L3 3.500c0-1.500 1.500-1.500 2 0L6 7.500V1.500c0-1.500 2-1.500 2 0v6l1-5.500c0-1.500 2-1 2 .5L10.500 8 12.500 4c1-1.200 2 0 1.500 1l-1.500 5.500L11 14v1.500H5z"
        fill="#f5f8fb"
        stroke={INK}
      />
    ),
  },
  {
    name: 'Zoom',
    icon: (
      <>
        <circle cx="5.500" cy="6.500" r="4.500" fill="#f5f8fb" stroke={INK} />
        <path d="M9 10l5 5" stroke={INK} strokeWidth="2.500" />
        <path d="M11 3.500h5M13.500 1v5M11 7.500h5" stroke={INK} />
      </>
    ),
  },
  {
    name: 'Fit',
    menu: true,
    icon: (
      <>
        <path d="M.5.5h15v15H.5z" stroke={INK} strokeDasharray="2 2" />
        <circle cx="7" cy="7" r="5.500" fill="#d5eaf2" stroke={INK} />
        <path d="M11 11l4 4" stroke={INK} strokeWidth="3" />
      </>
    ),
  },
  {
    name: 'Display Settings',
    menu: true,
    icon: (
      <>
        <path d="M.5 1.500h15v11H.5zM5 13v2.500h6V13" fill="#e6ebef" stroke={INK} />
        <path d="M2.500 3.500h11v7h-11z" fill="#7fb1e6" stroke={INK} />
      </>
    ),
  },
  {
    name: 'Grid and Snaps',
    menu: true,
    icon: <path d="M.5.5h15v15H.5zM.5 3.500h15M.5 6.500h15M.5 9.500h15M.5 12.500h15M3.500.5v15M6.500.5v15M9.500.5v15M12.500.5v15" stroke="#59616b" />,
  },
  {
    name: 'Viewports',
    menu: true,
    icon: (
      <>
        <path d="M.5 1.500h15v13H.5z" fill="#90bbe8" stroke={INK} />
        <path d="M8 1.500v13M.5 8h15" stroke={INK} strokeWidth="1.500" />
      </>
    ),
  },
];

function NavigationBar(): JSX.Element {
  return (
    <div className="flex h-[30px] items-center gap-[9px] bg-[#f1f1f1] px-[2px] pb-[2px]">
      {navTools.map((tool) => (
        <button key={tool.name} type="button" aria-label={tool.name} className="flex items-center gap-[2px]">
          <Icon size={16} box={16}>
            {tool.icon}
          </Icon>
          {tool.menu && <Caret />}
        </button>
      ))}
    </div>
  );
}

const playback: [string, string][] = [
  ['Go to start', 'M0 0h2v14H0zM12 0v14L2 7z'],
  ['Step back', 'M9 1v12L0 7zM10 4h3v6h-3z'],
  ['Play', 'M0 0v14L12 7z'],
  ['Step forward', 'M4 1v12L13 7zM0 4h3v6H0z'],
  ['Go to end', 'M0 0v14L10 7zM10 0h2v14h-2z'],
];

const sketchFeature = (
  <>
    <path d="M2 2h12v12H2z" stroke="#555" />
    <path d="M0 0h3v3H0zM13 0h3v3h-3zM0 13h3v3H0z" fill="#3a8ccc" />
    <path d="M8 15l1-3 5-4 2 2-5 4z" fill="#f0a449" />
    <path d="M14 8l2 2" stroke="#d05050" />
  </>
);

const features: [string, JSX.Element][] = [
  ['Sketch1', sketchFeature],
  ['Sketch2', sketchFeature],
  [
    'Loft1',
    <>
      <path d="M0 0h16v5l-3 9H4L0 5z" fill={BLUE} />
      <path d="M0 1h16l-4 4H4z" fill="#8cc8f0" />
      <circle cx="8" cy="12" r="3.500" fill="#fff" stroke="#777" />
    </>,
  ],
  [
    'Shell1',
    <>
      <path d="M1 5l3-4h11v10l-3 4H1z" fill="#ececec" stroke={EDGE} strokeWidth="1.300" />
      <path d="M3 6h3v4h5v4H3z" fill="#3583c2" />
    </>,
  ],
];

function Timeline(): JSX.Element {
  return (
    <footer className="flex h-[52px] shrink-0 flex-col bg-[#f1f1f1]">
      <div className="flex grow items-center border-t-2 border-[#cbcbcb] pr-[13px] pl-[11px]">
        <div className="flex items-center gap-[11px]">
          {playback.map(([name, d]) => (
            <button key={name} type="button" aria-label={name}>
              <Icon size={14} box={14}>
                <path d={d} fill="#3b3b3b" />
              </Icon>
            </button>
          ))}
        </div>
        <div className="relative ml-[17px] flex h-8 pt-[6px]">
          {features.map(([name, icon]) => (
            <button
              key={name}
              type="button"
              aria-label={name}
              className="flex h-[25px] w-6 flex-col items-center justify-between border-b border-[#bbb]"
            >
              <Icon size={16} box={16}>
                {icon}
              </Icon>
              <span className="h-[5px] w-px bg-[#aaa]" />
            </button>
          ))}
          <svg width="12" height="32" viewBox="0 0 12 32" className="absolute top-0 -right-[6px]" aria-hidden="true">
            <path d="M0 0h12v5L7 9v23H5V9L0 5z" fill="#555" />
          </svg>
        </div>
        <button type="button" aria-label="Timeline settings" className="ml-auto">
          <Gear color="#8c8c8c" />
        </button>
      </div>
      <div className="flex h-[2px] shrink-0">
        <span className="w-12 bg-[#1f5f63]" />
        <span className="w-[344px] bg-[#c9d3d8]" />
        <span className="w-[588px] bg-[#2a6468]" />
        <span className="w-[98px] bg-[#8f8552]" />
        <span className="w-[49px] bg-[#2a6468]" />
        <span className="w-[46px] bg-[#2a8f99]" />
        <span className="grow bg-[#2a6468]" />
      </div>
    </footer>
  );
}

export default function App(): JSX.Element {
  return (
    <div className="flex min-h-screen flex-col font-['Roboto',sans-serif] text-[11px] leading-4 text-[#444]">
      <TitleBar />
      <TabBar />
      <Ribbon />
      <div className="flex h-8 shrink-0 items-center bg-[#ffc26e] pr-4 font-['Liberation_Sans',sans-serif] text-[13px] font-bold text-white">
        <p className="grow text-center">
          This computer&apos;s graphics driver or hardware may be limiting performance.{' '}
          <a href="#learn-more" className="underline">
            Learn more here.
          </a>
        </p>
        <button type="button" aria-label="Dismiss">
          <Icon size={10} box={10}>
            <path d="M1 1l8 8M9 1L1 9" stroke="#fff" strokeWidth="2.500" />
          </Icon>
        </button>
      </div>
      <main className="relative flex grow flex-col justify-between overflow-hidden">
        <Viewport3D />
        <ViewCube />
        <BrowserPanel />
        <div className="relative grid grid-cols-[1fr_auto_1fr] items-start">
          <div className="pl-1">
            <div className="flex h-[26px] w-[300px] items-center border border-[#d5d5d5] bg-[#f2f2f2] pr-px pl-6">
              <h2 className="text-[#666]">COMMENTS</h2>
              <button type="button" aria-label="Add comment" className="ml-auto">
                <Icon size={10} box={10}>
                  <circle cx="5" cy="5" r="4.500" fill="#222" />
                  <path d="M2.500 5h5M5 2.500v5" stroke="#fff" strokeWidth="1.300" />
                </Icon>
              </button>
              <span className="ml-[7px] h-3 w-[3px] border-x border-[#999]" />
            </div>
          </div>
          <NavigationBar />
        </div>
      </main>
      <Timeline />
    </div>
  );
}
